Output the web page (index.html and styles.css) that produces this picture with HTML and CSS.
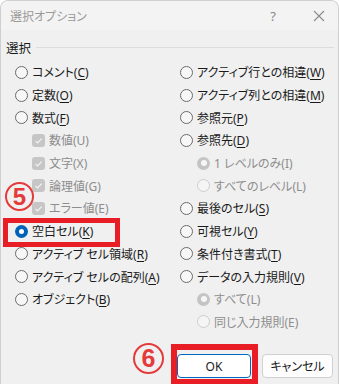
FILE: index.html
```html
<!DOCTYPE html>
<html lang="ja">
<head>
<meta charset="utf-8">
<title>選択オプション</title>
<link rel="stylesheet" href="styles.css">
</head>
<body>
<div class="dialog">
  <div class="titlebar">
    <span class="title">選択オプション</span>
    <span class="tb-btn help">?</span>
    <span class="tb-btn close">
      <svg width="12" height="12" viewBox="0 0 12 12"><path d="M1 1L11 11M11 1L1 11" stroke="#8a8a8a" stroke-width="1.1" fill="none"/></svg>
    </span>
  </div>
  <div class="group">
    <div class="legend"><span class="legend-text">選択</span><span class="legend-line"></span></div>
    <div class="cols">
      <div class="col">
        <div class="row"><span class="radio"></span><span>コメント(<u>C</u>)</span></div>
        <div class="row"><span class="radio"></span><span>定数(<u>O</u>)</span></div>
        <div class="row"><span class="radio"></span><span>数式(<u>F</u>)</span></div>
        <div class="row sub dis"><span class="check"><svg width="13" height="13" viewBox="0 0 13 13"><path d="M3.5 6.8L5.6 8.9L9.6 4.6" stroke="#f4f4f4" stroke-width="1.2" fill="none"/></svg></span><span>数値(U)</span></div>
        <div class="row sub dis"><span class="check"><svg width="13" height="13" viewBox="0 0 13 13"><path d="M3.5 6.8L5.6 8.9L9.6 4.6" stroke="#f4f4f4" stroke-width="1.2" fill="none"/></svg></span><span>文字(X)</span></div>
        <div class="row sub dis"><span class="check"><svg width="13" height="13" viewBox="0 0 13 13"><path d="M3.5 6.8L5.6 8.9L9.6 4.6" stroke="#f4f4f4" stroke-width="1.2" fill="none"/></svg></span><span>論理値(G)</span></div>
        <div class="row sub dis"><span class="check"><svg width="13" height="13" viewBox="0 0 13 13"><path d="M3.5 6.8L5.6 8.9L9.6 4.6" stroke="#f4f4f4" stroke-width="1.2" fill="none"/></svg></span><span>エラー値(E)</span></div>
        <div class="row"><span class="radio on"></span><span>空白セル(<u>K</u>)</span></div>
        <div class="row"><span class="radio"></span><span>アクティブ セル領域(<u>R</u>)</span></div>
        <div class="row"><span class="radio"></span><span>アクティブ セルの配列(<u>A</u>)</span></div>
        <div class="row"><span class="radio"></span><span>オブジェクト(<u>B</u>)</span></div>
      </div>
      <div class="col">
        <div class="row"><span class="radio"></span><span>アクティブ行との相違(<u>W</u>)</span></div>
        <div class="row"><span class="radio"></span><span>アクティブ列との相違(<u>M</u>)</span></div>
        <div class="row"><span class="radio"></span><span>参照元(<u>P</u>)</span></div>
        <div class="row"><span class="radio"></span><span>参照先(<u>D</u>)</span></div>
        <div class="row sub dis"><span class="radio on-dis"></span><span>1 レベルのみ(I)</span></div>
        <div class="row sub dis"><span class="radio off-dis"></span><span>すべてのレベル(L)</span></div>
        <div class="row"><span class="radio"></span><span>最後のセル(<u>S</u>)</span></div>
        <div class="row"><span class="radio"></span><span>可視セル(<u>Y</u>)</span></div>
        <div class="row"><span class="radio"></span><span>条件付き書式(<u>T</u>)</span></div>
        <div class="row"><span class="radio"></span><span>データの入力規則(<u>V</u>)</span></div>
        <div class="row sub dis"><span class="radio on-dis"></span><span>すべて(L)</span></div>
        <div class="row sub dis"><span class="radio off-dis"></span><span>同じ入力規則(E)</span></div>
      </div>
    </div>
  </div>
  <div class="buttons">
    <button class="btn primary">OK</button>
    <button class="btn">キャンセル</button>
  </div>
  <div class="mark box-blank"></div>
  <div class="mark box-ok"></div>
  <div class="num num5">5</div>
  <div class="num num6">6</div>
</div>
</body>
</html>
```

FILE: styles.css
```css
html, body {
  margin: 0;
  padding: 0;
  background: #ffffff;
}
body {
  font-family: "Noto Sans", "Noto Sans CJK JP", sans-serif;
  font-size: 12px;
  color: #1a1a1a;
  font-feature-settings: "palt";
}
.dialog {
  position: relative;
  width: 337px;
  height: 383px;
  background: #f0f0f0;
  border: 1px solid #cfcfcf;
  border-bottom: none;
  border-radius: 8px 8px 0 0;
  overflow: hidden;
}
.titlebar {
  height: 29px;
  display: flex;
  align-items: center;
  padding-left: 9px;
  background: #f3f3f3;
}
.title {
  flex: 1;
  color: #9a9a9a;
  font-size: 12px;
}
.tb-btn {
  display: flex;
  align-items: center;
  justify-content: center;
  color: #8a8a8a;
}
.help {
  width: 20px;
  margin-right: 26px;
  font-size: 13px;
}
.close {
  width: 20px;
  margin-right: 9px;
}
.group {
  padding: 8px 4px 0 5px;
}
.legend {
  height: 18px;
  display: flex;
  align-items: center;
  gap: 5px;
}
.legend-text {
  font-size: 12.5px;
  color: #1a1a1a;
}
.legend-line {
  flex: 1;
  border-top: 1px solid #dcdcdc;
}
.cols {
  margin-top: 5px;
  padding-left: 9px;
  display: grid;
  grid-template-columns: 165px 1fr;
}
.row {
  height: 22.7px;
  display: flex;
  align-items: center;
  gap: 4px;
  white-space: nowrap;
}
.row u {
  text-decoration-thickness: 1px;
  text-underline-offset: 2px;
}
.row.sub {
  padding-left: 17px;
}
.row.dis {
  color: #8d8d8d;
}
.radio {
  box-sizing: border-box;
  width: 13px;
  height: 13px;
  border-radius: 50%;
  border: 1px solid #6b6b6b;
  background: #f7f7f7;
  flex: none;
  position: relative;
}
.radio.on {
  border: none;
  background: #0063b8;
}
.radio.on::after {
  content: "";
  position: absolute;
  left: 4px;
  top: 4px;
  width: 5px;
  height: 5px;
  border-radius: 50%;
  background: #ffffff;
}
.radio.on-dis {
  border: none;
  background: #c4c4c4;
}
.radio.on-dis::after {
  content: "";
  position: absolute;
  left: 3.5px;
  top: 3.5px;
  width: 6px;
  height: 6px;
  border-radius: 50%;
  background: #f7f7f7;
}
.radio.off-dis {
  border-color: #cccccc;
  background: #f5f5f5;
}
.check {
  width: 13px;
  height: 13px;
  border-radius: 3px;
  background: #c6c6c6;
  flex: none;
  display: flex;
}
.buttons {
  position: absolute;
  left: 0;
  right: 0;
  bottom: 6px;
  display: flex;
  justify-content: flex-end;
  gap: 11px;
  padding-right: 5px;
}
.btn {
  box-sizing: border-box;
  height: 24px;
  font-family: "Noto Sans", "Noto Sans CJK JP", sans-serif;
  font-size: 12px;
  color: #1a1a1a;
  background: #fdfdfd;
  border: 1px solid #d0d0d0;
  border-radius: 4px;
  padding: 0;
  font-feature-settings: "palt";
}
.btn.primary {
  width: 74px;
  border-color: #0067c0;
  background: #ffffff;
}
.btn:not(.primary) {
  width: 71px;
}
.mark {
  position: absolute;
  box-sizing: border-box;
  border: 5px solid #e81d25;
}
.box-blank {
  left: 2px;
  top: 217px;
  width: 117px;
  height: 29px;
}
.box-ok {
  left: 170px;
  top: 343px;
  width: 87px;
  height: 41px;
  border-width: 6px;
}
.num {
  position: absolute;
  box-sizing: border-box;
  border: 2.5px solid #e53a3a;
  border-radius: 50%;
  color: #e53a3a;
  font-family: "Liberation Sans", sans-serif;
  font-weight: bold;
  display: flex;
  align-items: center;
  justify-content: center;
  line-height: 1;
}
.num5 {
  left: 4px;
  top: 181px;
  width: 29px;
  height: 29px;
  font-size: 24px;
}
.num6 {
  left: 132px;
  top: 342px;
  width: 31px;
  height: 31px;
  font-size: 25px;
}
```
